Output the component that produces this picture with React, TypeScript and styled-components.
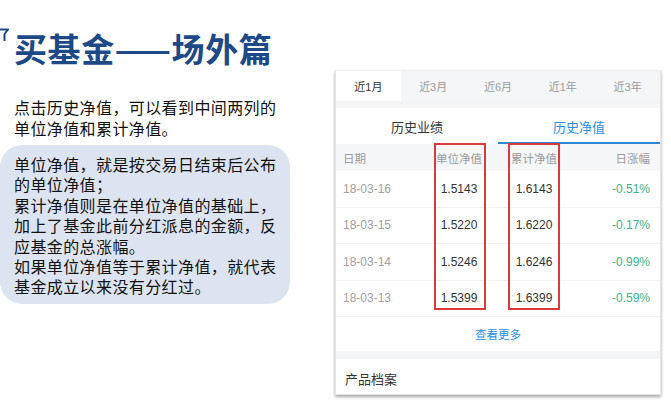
import styled, { createGlobalStyle } from "styled-components";

const GlobalStyle = createGlobalStyle`
  html, body {
    margin: 0;
    padding: 0;
    background: #ffffff;
  }
  body {
    font-family: "Noto Sans CJK SC", "Liberation Sans", sans-serif;
  }
`;

interface INavRow {
  date: string;
  unit: string;
  total: string;
  change: string;
}

const rows: INavRow[] = [
  { date: "18-03-16", unit: "1.5143", total: "1.6143", change: "-0.51%" },
  { date: "18-03-15", unit: "1.5220", total: "1.6220", change: "-0.17%" },
  { date: "18-03-14", unit: "1.5246", total: "1.6246", change: "-0.99%" },
  { date: "18-03-13", unit: "1.5399", total: "1.6399", change: "-0.59%" },
];

const periods = ["近1月", "近3月", "近6月", "近1年", "近3年"];

const bubbleLines = [
  "单位净值，就是按交易日结束后公布",
  "的单位净值；",
  "累计净值则是在单位净值的基础上，",
  "加上了基金此前分红派息的金额，反",
  "应基金的总涨幅。",
  "如果单位净值等于累计净值，就代表",
  "基金成立以来没有分红过。",
];

const Page = styled.div`
  width: 671px;
  height: 409px;
  overflow: hidden;
  position: relative;
`;

const Header = styled.header`
  height: 70px;
  box-sizing: border-box;
  padding-top: 27px;
  display: flex;
  align-items: flex-start;
`;

const Mark = styled.svg`
  width: 9px;
  height: 16px;
  margin-top: 0px;
  flex-shrink: 0;
`;

const Title = styled.h1`
  margin: 0 0 0 5px;
  font-size: 33px;
  line-height: 42px;
  font-weight: 700;
  color: #1d4a87;
  letter-spacing: 0.6px;
`;

const Body = styled.div`
  display: grid;
  grid-template-columns: 335px 326px;
`;

const Left = styled.div`
  padding-top: 27px;
  display: flex;
  flex-direction: column;
  gap: 6px;
`;

const Intro = styled.p`
  margin: 0;
  padding-left: 14px;
  font-size: 16px;
  line-height: 21px;
  letter-spacing: 0.4px;
  color: #111;
`;

const Bubble = styled.div`
  width: 290px;
  box-sizing: border-box;
  padding: 9px 0 7px 14px;
  border-radius: 22px;
  background: #dde4f1;
  font-size: 16px;
  letter-spacing: 0.4px;
  color: #111;
`;

const BubbleLine = styled.div`
  height: 20.4px;
  line-height: 20.4px;
  white-space: nowrap;
`;

const Card = styled.div`
  position: relative;
  background: #fff;
  border: 1px solid #e4e4e4;
  border-top-color: #f0f0f0;
  box-shadow: 0 2px 3px rgba(0, 0, 0, 0.35);
  font-family: "Liberation Sans", "Noto Sans CJK SC", sans-serif;
  height: 325px;
  box-sizing: border-box;
  display: flex;
  flex-direction: column;
`;

const PeriodBar = styled.div`
  display: grid;
  grid-template-columns: repeat(5, 1fr);
  height: 30px;
  background: #f5f6f8;
`;

const Period = styled.div<{ $active?: boolean }>`
  display: flex;
  align-items: center;
  justify-content: center;
  font-size: 11px;
  color: ${(p) => (p.$active ? "#333" : "#9a9a9a")};
  background: ${(p) => (p.$active ? "#fff" : "transparent")};
`;

const Band = styled.div<{ $h: number }>`
  height: ${(p) => p.$h}px;
  background: #f4f5f7;
`;

const Sections = styled.div`
  display: grid;
  grid-template-columns: 1fr 1fr;
  height: 36px;
`;

const Section = styled.div<{ $active?: boolean }>`
  display: flex;
  align-items: center;
  justify-content: center;
  font-size: 13px;
  color: ${(p) => (p.$active ? "#2b8ee0" : "#333")};
  border-bottom: 2px solid ${(p) => (p.$active ? "#2f87d6" : "transparent")};
  box-sizing: border-box;
  padding-top: 2px;
`;

const Row = styled.div<{ $head?: boolean }>`
  display: grid;
  grid-template-columns: 90px 52px 23px 52px 1fr;
  align-items: center;
  height: ${(p) => (p.$head ? "27px" : "36.5px")};
  padding: 0 10px 0 7px;
  background: ${(p) => (p.$head ? "#f6f7f9" : "#fff")};
  border-bottom: ${(p) => (p.$head ? "none" : "1px solid #f2f2f2")};
  box-sizing: border-box;
  font-size: ${(p) => (p.$head ? "11.5px" : "12px")};
`;

const Cell = styled.span<{ $align?: string; $color?: string }>`
  text-align: ${(p) => p.$align || "left"};
  color: ${(p) => p.$color || "#333"};
  white-space: nowrap;
`;

const More = styled.div`
  height: 34px;
  display: flex;
  align-items: center;
  justify-content: center;
  font-size: 11.5px;
  color: #2b8ee0;
`;

const Archive = styled.div`
  flex: 1;
  display: flex;
  align-items: center;
  padding: 3px 0 0 9px;
  font-size: 13px;
  color: #333;
`;

const Highlight = styled.div<{ $left: number }>`
  position: absolute;
  top: 72px;
  left: ${(p) => p.$left}px;
  width: 52px;
  height: 167px;
  border: 2px solid #d93a3a;
  box-sizing: border-box;
  pointer-events: none;
`;

function App() {
  return (
    <Page>
      <GlobalStyle />
      <Header>
        <Mark viewBox="0 0 9 16">
          <path d="M0 2.5 H8 L4.5 7 V14" fill="none" stroke="#1d4a87" strokeWidth="2" />
        </Mark>
        <Title>买基金——场外篇</Title>
      </Header>
      <Body>
        <Left>
          <Intro>
            点击历史净值，可以看到中间两列的
            <br />
            单位净值和累计净值。
          </Intro>
          <Bubble>
            {bubbleLines.map((line) => (
              <BubbleLine key={line}>{line}</BubbleLine>
            ))}
          </Bubble>
        </Left>
        <Card>
          <PeriodBar>
            {periods.map((p, i) => (
              <Period key={p} $active={i === 0}>
                {p}
              </Period>
            ))}
          </PeriodBar>
          <Band $h={7} />
          <Sections>
            <Section>历史业绩</Section>
            <Section $active>历史净值</Section>
          </Sections>
          <Row $head>
            <Cell $color="#999">日期</Cell>
            <Cell $align="center" $color="#999">单位净值</Cell>
            <span />
            <Cell $align="center" $color="#999">累计净值</Cell>
            <Cell $align="right" $color="#999">日涨幅</Cell>
          </Row>
          {rows.map((r) => (
            <Row key={r.date}>
              <Cell $color="#a0a0a0">{r.date}</Cell>
              <Cell $align="center">{r.unit}</Cell>
              <span />
              <Cell $align="center">{r.total}</Cell>
              <Cell $align="right" $color="#3cb38a">{r.change}</Cell>
            </Row>
          ))}
          <More>查看更多</More>
          <Band $h={8} />
          <Archive>产品档案</Archive>
          <Highlight $left={98} />
          <Highlight $left={172} />
        </Card>
      </Body>
    </Page>
  );
}

export default App;
